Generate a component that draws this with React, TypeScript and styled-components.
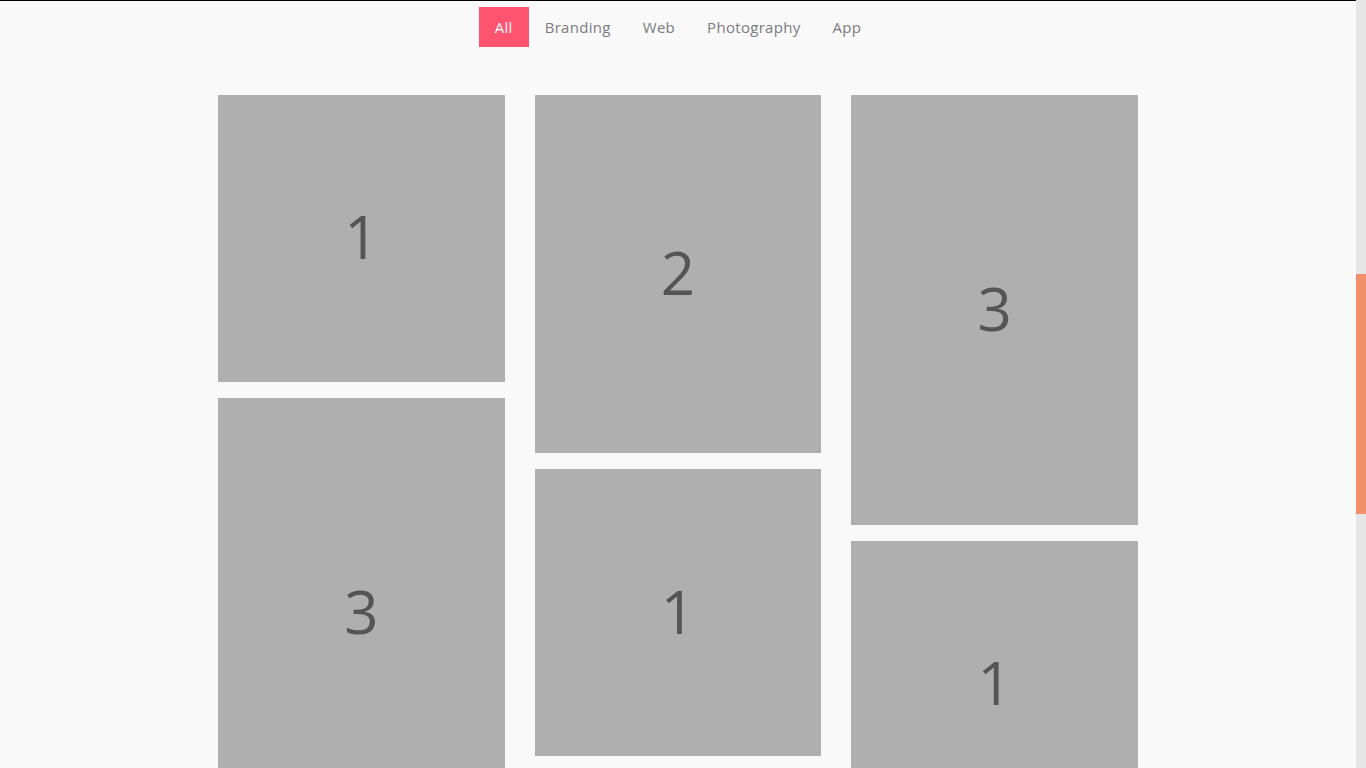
import styled, { createGlobalStyle } from "styled-components";

const GlobalStyle = createGlobalStyle`
  html, body {
    margin: 0;
    padding: 0;
    height: 100%;
    overflow: hidden;
    background: #f9f9f9;
    font-family: "Open Sans", "Liberation Sans", sans-serif;
  }
`;

const Screen = styled.div`
  display: flex;
  height: 100vh;
`;

const Page = styled.main`
  flex: 1;
  height: 100%;
  overflow: hidden;
  border-top: 1px solid #000;
  box-sizing: border-box;
`;

const FilterBar = styled.nav`
  display: flex;
  justify-content: center;
  padding-top: 6px;
`;

const FilterTab = styled.button<{ $active?: boolean }>`
  border: 0;
  margin: 0;
  height: 40px;
  padding: 0 16px;
  font-family: inherit;
  font-size: 15px;
  letter-spacing: 0.3px;
  cursor: pointer;
  background: ${(p) => (p.$active ? "#ff546f" : "transparent")};
  color: ${(p) => (p.$active ? "#ffffff" : "#7b7b80")};
`;

const Grid = styled.div`
  display: grid;
  grid-template-columns: repeat(3, 1fr);
  column-gap: 30px;
  width: 920px;
  margin: 48px auto 0;
`;

const Column = styled.div`
  display: flex;
  flex-direction: column;
  gap: 16px;
`;

const Tile = styled.div<{ $ratio: number }>`
  background: #afafaf;
  aspect-ratio: 1 / ${(p) => p.$ratio};
  display: flex;
  align-items: center;
  justify-content: center;
  color: #555555;
  font-size: 60px;
  line-height: 1;
  padding-bottom: 4px;
  box-sizing: border-box;
`;

const ScrollTrack = styled.div`
  width: 10px;
  background: #e6e6e6;
  display: flex;
  flex-direction: column;
`;

const ScrollThumb = styled.div`
  margin-top: 274px;
  height: 240px;
  background: #f0906a;
`;

const tabs = ["All", "Branding", "Web", "Photography", "App"];

const columns: { label: string; ratio: number }[][] = [
  [
    { label: "1", ratio: 1 },
    { label: "3", ratio: 1.5 },
  ],
  [
    { label: "2", ratio: 1.25 },
    { label: "1", ratio: 1 },
  ],
  [
    { label: "3", ratio: 1.5 },
    { label: "1", ratio: 1 },
  ],
];

export default function App() {
  return (
    <>
      <GlobalStyle />
      <Screen>
        <Page>
          <FilterBar>
            {tabs.map((t, i) => (
              <FilterTab key={t} $active={i === 0}>
                {t}
              </FilterTab>
            ))}
          </FilterBar>
          <Grid>
            {columns.map((col, ci) => (
              <Column key={ci}>
                {col.map((tile, ti) => (
                  <Tile key={ti} $ratio={tile.ratio}>
                    {tile.label}
                  </Tile>
                ))}
              </Column>
            ))}
          </Grid>
        </Page>
        <ScrollTrack>
          <ScrollThumb />
        </ScrollTrack>
      </Screen>
    </>
  );
}
